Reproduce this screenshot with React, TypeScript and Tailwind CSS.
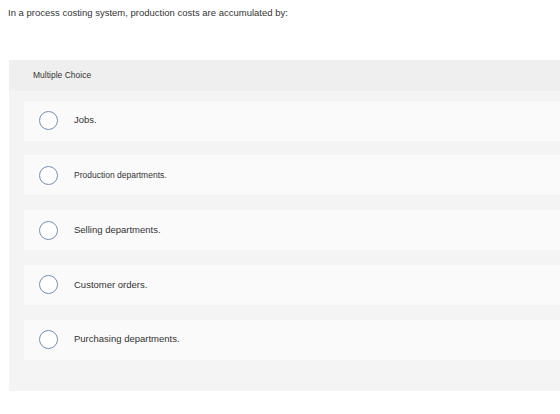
const options = [
  { label: "Jobs.", small: false },
  { label: "Production departments.", small: true },
  { label: "Selling departments.", small: false },
  { label: "Customer orders.", small: false },
  { label: "Purchasing departments.", small: false },
];

function Radio() {
  return (
    <span className="inline-block size-[19px] shrink-0 rounded-full border-[1.5px] border-[#7390bb] bg-white" />
  );
}

export default function App() {
  return (
    <div className="h-[414px] w-[560px] overflow-hidden bg-white font-['Liberation_Sans',Arial,sans-serif] text-[#333]">
      <p className="pl-2 pt-[7px] text-[9.5px] leading-[12px]">
        In a process costing system, production costs are accumulated by:
      </p>

      <div className="ml-[9px] mt-[41px] bg-[#f4f4f4] pb-[31.5px]">
        <div className="flex h-[31px] items-center bg-[#efefef] pl-6 text-[8.5px]">
          Multiple Choice
        </div>

        <div className="mt-[9.5px] flex flex-col gap-[14.75px] pl-[15px]">
          {options.map((o) => (
            <div key={o.label} className="flex h-10 items-center bg-[#fafafa] pl-[14.5px]">
              <Radio />
              <span className={o.small ? "ml-[16.5px] text-[8.5px]" : "ml-[16.5px] text-[9.5px]"}>
                {o.label}
              </span>
            </div>
          ))}
        </div>
      </div>
    </div>
  );
}
